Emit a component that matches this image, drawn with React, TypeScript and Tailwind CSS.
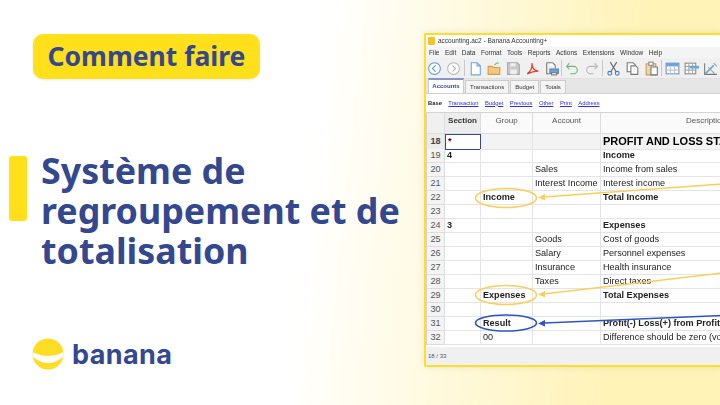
import { ReactNode } from "react";

const BLUE = "text-[#34488f]";

const MENU = ["File", "Edit", "Data", "Format", "Tools", "Reports", "Actions", "Extensions", "Window", "Help"];
const TABS = ["Transactions", "Budget", "Totals"];
const LINKS = ["Transaction", "Budget", "Previous", "Other", "Print", "Address"];

type Row = {
  n: number;
  section?: string;
  group?: string;
  account?: string;
  desc?: string;
  bold?: boolean;
};

const ROWS: Row[] = [
  { n: 19, section: "4", desc: "Income", bold: true },
  { n: 20, account: "Sales", desc: "Income from sales" },
  { n: 21, account: "Interest Income", desc: "Interest income" },
  { n: 22, group: "Income", desc: "Total Income", bold: true },
  { n: 23 },
  { n: 24, section: "3", desc: "Expenses", bold: true },
  { n: 25, account: "Goods", desc: "Cost of goods" },
  { n: 26, account: "Salary", desc: "Personnel expenses" },
  { n: 27, account: "Insurance", desc: "Health insurance" },
  { n: 28, account: "Taxes", desc: "Direct taxes" },
  { n: 29, group: "Expenses", desc: "Total Expenses", bold: true },
  { n: 30 },
  { n: 31, group: "Result", desc: "Profit(-) Loss(+) from Profit", bold: true },
  { n: 32, group: "00", desc: "Difference should be zero (void)" },
];

const COLS = "grid grid-cols-[18px_36px_52px_68px_1fr]";
const CELL = "border-r border-b border-[#e4e4e4] overflow-hidden whitespace-nowrap pl-[2px]";

function Ico({ children }: { children: ReactNode }) {
  return (
    <svg width="17" height="17" viewBox="0 0 16 16" fill="none" strokeWidth="1" className="shrink-0">
      {children}
    </svg>
  );
}

function Sep() {
  return <div className="mx-[-0.25px] h-[16px] w-px shrink-0 bg-[#c8c8c8]" />;
}

function Toolbar() {
  return (
    <div className="flex h-[21px] items-center gap-[2px] border-b border-[#e0e0e0] bg-[#f0f0f0]">
      <Ico>
        <circle cx="8" cy="8" r="5.5" stroke="#5b9bd5" fill="#fff" />
        <path d="M9 5L6 8l3 3" stroke="#5b9bd5" />
      </Ico>
      <Ico>
        <circle cx="8" cy="8" r="5.5" stroke="#b5b5b5" fill="#fff" />
        <path d="M7 5l3 3-3 3" stroke="#b5b5b5" />
      </Ico>
      <Sep />
      <Ico>
        <path d="M4 2.500h5.500l3 3v8.500H4z" stroke="#6aa5d8" fill="#fff" />
        <path d="M9.500 2.500v3h3" stroke="#6aa5d8" />
      </Ico>
      <Ico>
        <path d="M2 6h4l1 1h6v6.500H2z" fill="#f3c77f" stroke="#d79a45" />
        <path d="M8 5c1-2 3-2.500 4-2" stroke="#6fb56f" />
      </Ico>
      <Ico>
        <path d="M2.500 2.500h9l2 2v9h-11z" fill="#c9c9c9" stroke="#a5a5a5" />
        <rect x="5" y="9" width="6" height="4.500" fill="#eee" />
        <rect x="5" y="3" width="5" height="3" fill="#eee" />
      </Ico>
      <Ico>
        <path d="M3 13c3-2 5-6 4.500-10 0 4 2 7 6 7.500-4 0-7.500 1-10.500 2.500z" stroke="#d9432f" strokeWidth="1.200" />
      </Ico>
      <Ico>
        <path d="M3.500 2.500H9l2.500 2.500v3" stroke="#777" fill="#fff" />
        <path d="M3.500 2.500V13h3" stroke="#777" />
        <rect x="6.500" y="8.500" width="8" height="4" fill="#6aa5d8" stroke="#5a7ea8" />
        <rect x="8" y="12" width="5" height="2" fill="#fff" stroke="#777" />
      </Ico>
      <Sep />
      <Ico>
        <path d="M5 3L2.500 6 5 8.500" stroke="#6fb56f" />
        <path d="M3 6h6a3.500 3.500 0 0 1 0 7H6" stroke="#6fb56f" />
      </Ico>
      <Ico>
        <path d="M11 3l2.500 3L11 8.500" stroke="#b5b5b5" />
        <path d="M13 6H7a3.500 3.500 0 0 0 0 7h3" stroke="#b5b5b5" />
      </Ico>
      <Sep />
      <Ico>
        <path d="M5 2l5.500 9M11 2L5.500 11" stroke="#666" />
        <circle cx="4.500" cy="12.500" r="1.800" stroke="#3f7fbf" />
        <circle cx="11.500" cy="12.500" r="1.800" stroke="#3f7fbf" />
      </Ico>
      <Ico>
        <path d="M3 2.500h5.500l2 2V11H3z" fill="#fff" stroke="#777" />
        <path d="M6.500 5.500H11l2 2v6H6.500z" fill="#fff" stroke="#777" />
      </Ico>
      <Ico>
        <path d="M3 3.500h9V14H3z" fill="#f4d5a6" stroke="#c99a5b" />
        <rect x="5.500" y="2" width="4" height="3" fill="#fff" stroke="#888" />
        <path d="M7.500 6.500h6V14h-6z" fill="#fff" stroke="#777" />
      </Ico>
      <Sep />
      <Ico>
        <rect x="2" y="3" width="12" height="10" fill="#fff" stroke="#7a8ea8" />
        <rect x="2" y="3" width="12" height="3" fill="#6aa5d8" />
        <path d="M2 9.500h12M6 6v7M10 6v7" stroke="#b5c3d4" />
      </Ico>
      <Ico>
        <rect x="2" y="3" width="10" height="10" fill="#fff" stroke="#888" />
        <path d="M2 6h10M2 9.500h10M5.500 3v10M9 3v10" stroke="#aaa" />
        <rect x="6" y="5.500" width="9" height="2.500" fill="#6aa5d8" />
      </Ico>
      <Ico>
        <path d="M2.500 3v10.500H14" stroke="#777" />
        <path d="M3 13l8-8" stroke="#6aa5d8" strokeWidth="1.500" />
        <path d="M6 7l6 6M11 3l3 3" stroke="#8aa" />
      </Ico>
    </div>
  );
}

function Callouts() {
  return (
    <svg width="296" height="334" viewBox="426 35 296 334" fill="none" className="pointer-events-none absolute left-0 top-0">
      <ellipse cx="506" cy="198" rx="30.500" ry="9.500" stroke="#f8cf5e" strokeWidth="1.600" />
      <path d="M722 184L544 197" stroke="#f8cf5e" strokeWidth="1.600" />
      <path d="M538 197.500l7-3.500v6.500z" fill="#f8cf5e" />

      <ellipse cx="506" cy="295" rx="30.500" ry="9.500" stroke="#f8cf5e" strokeWidth="1.600" />
      <path d="M722 273L544 294" stroke="#f8cf5e" strokeWidth="1.600" />
      <path d="M538 294.500l7-3.500v6.500z" fill="#f8cf5e" />

      <ellipse cx="506" cy="323" rx="30.500" ry="8" stroke="#2f55c4" strokeWidth="1.600" />
      <path d="M722 315.500L544 323" stroke="#2f55c4" strokeWidth="1.600" />
      <path d="M538 323.500l7-3.500v6.500z" fill="#2f55c4" />
    </svg>
  );
}

function AppWindow() {
  return (
    <div className="relative h-[334px] w-[300px] overflow-hidden rounded-l-[2px] border-2 border-r-0 border-[#ffdc2e] bg-white font-['Liberation_Sans',sans-serif] shadow-[0_0_8px_rgba(0,0,0,0.08)]">
      <div className="h-full blur-[0.35px]">
        <div className="flex h-[12px] items-center gap-[3px] pl-[2px] text-[6.500px] text-[#333]">
          <div className="h-[8px] w-[7px] rounded-[1px] bg-[#f5c22e]" />
          <span>accounting.ac2 - Banana Accounting+</span>
        </div>
        <div className="flex h-[11px] items-center gap-[5.500px] bg-[#f4f4f4] pl-[3px] text-[6.500px] text-[#333]">
          {MENU.map((m) => (
            <span key={m}>{m}</span>
          ))}
        </div>
        <Toolbar />
        <div className="flex h-[15px] items-end gap-px border-b border-[#d0d0d0] bg-[#e6e6e6] pl-[2px] text-[6px] text-[#333]">
          <div className="flex h-[15px] w-[36px] items-center justify-center border-x border-t-2 border-[#8a94c0] border-x-[#ccc] bg-white font-bold text-[#34488f]">
            Accounts
          </div>
          {TABS.map((t) => (
            <div key={t} className="flex h-[13px] items-center border border-b-0 border-[#ccc] bg-[#f4f4f4] px-[4px]">
              {t}
            </div>
          ))}
        </div>
        <div className="flex h-[18px] items-center gap-[6.500px] pl-[2px] text-[5.800px]">
          <span className="font-bold text-[#222]">Base</span>
          {LINKS.map((l) => (
            <span key={l} className="text-[#2f2fe8] underline">
              {l}
            </span>
          ))}
        </div>

        <div className="border-l border-t border-[#d4d4d4] text-[9.100px] leading-[13px] text-[#222]">
          <div className={`${COLS} h-[21px] text-[8px] leading-[15px] text-[#555]`}>
            <div className="border-r border-b border-[#ddd] bg-[#f0f0f0]" />
            <div className="border-r border-b border-[#ddd] bg-[#ececec] text-center font-bold text-[#333]">Section</div>
            <div className="border-r border-b border-[#ddd] bg-[#fafafa] text-center">Group</div>
            <div className="border-r border-b border-[#ddd] bg-[#fafafa] text-center">Account</div>
            <div className="overflow-hidden whitespace-nowrap border-b border-[#ddd] bg-[#fafafa] pl-[85px]">Description</div>
          </div>

          <div className={`${COLS} h-[15px] bg-[#f3f3f3]`}>
            <div className="border-r border-b border-[#ddd] bg-[#ececec] text-center font-bold leading-[15px] text-[#444]">18</div>
            <div className="border border-[#34488f] bg-white pl-[2px] font-bold">*</div>
            <div className={CELL} />
            <div className={CELL} />
            <div className={`${CELL} text-[11px] font-bold leading-[14px] text-black`}>PROFIT AND LOSS STATEMENT</div>
          </div>

          {ROWS.map((r) => (
            <div key={r.n} className={`${COLS} h-[14px]`}>
              <div className="border-r border-b border-[#ddd] bg-[#f4f4f4] text-center text-[#555]">{r.n}</div>
              <div className={`${CELL} font-bold`}>{r.section}</div>
              <div className={`${CELL} ${r.bold ? "font-bold" : ""}`}>{r.group}</div>
              <div className={CELL}>{r.account}</div>
              <div className={`${CELL} ${r.bold ? "font-bold" : ""}`}>{r.desc}</div>
            </div>
          ))}
        </div>
      </div>

      <div className="absolute bottom-0 left-0 right-0 flex h-[18px] items-center bg-[#f0f0f0] pl-[2px] text-[6px] text-[#555]">
        18 / 33
      </div>
      <Callouts />
    </div>
  );
}

export default function App() {
  return (
    <div className="flex h-[405px] w-[720px] overflow-hidden bg-[linear-gradient(96deg,#ffffff_43%,#fff3b8_85%,#fff3b8_100%)] font-['Noto_Sans',sans-serif]">
      <div className="flex w-[424px] shrink-0 flex-col pt-[34px]">
        <div className={`ml-[33px] flex h-[45px] w-[227px] items-center justify-center rounded-[10px] bg-[#ffe01b] text-[26.500px] font-bold shadow-[0_1px_3px_rgba(0,0,0,0.08)] ${BLUE}`}>
          Comment faire
        </div>
        <div className="mt-[71px] flex items-start gap-[14px] pl-[9px]">
          <div className="mt-[6px] h-[65px] w-[18px] shrink-0 rounded-[3px] bg-[#ffe01b]" />
          <h1 className={`text-[35.800px] font-bold leading-[40px] ${BLUE}`}>
            Système de
            <br />
            regroupement et de
            <br />
            totalisation
          </h1>
        </div>
        <div className="ml-[32px] mt-[68px] flex items-center gap-[8px]">
          <svg width="32" height="32" viewBox="0 0 32 32" className="shrink-0">
            <circle cx="16" cy="16" r="15.500" fill="#ffdd22" />
            <path d="M0.500 14Q16 22 31.500 14L31 19Q16 31 1 19Z" fill="#fff" />
          </svg>
          <span className={`font-['Inter',sans-serif] text-[27px] font-bold leading-none tracking-[0.4px] ${BLUE}`}>banana</span>
        </div>
      </div>
      <div className="pt-[33px]">
        <AppWindow />
      </div>
    </div>
  );
}
